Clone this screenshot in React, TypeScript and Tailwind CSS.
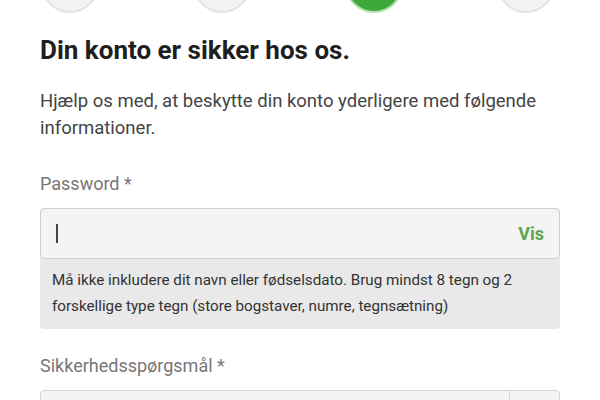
export default function App() {
  return (
    <div className="w-[600px] h-[400px] overflow-hidden bg-white font-['Roboto',sans-serif]">
      {/* Step indicators, cut off at the top */}
      <div className="flex gap-[94px] pl-[41px] -mt-[45px]">
        <div className="w-[58px] h-[58px] rounded-full bg-[#f3f3f3] border-2 border-[#e3e3e3]" />
        <div className="w-[58px] h-[58px] rounded-full bg-[#f3f3f3] border-2 border-[#e3e3e3]" />
        <div className="w-[58px] h-[58px] rounded-full bg-[#3fa83a] border-2 border-[#b5e0b0]" />
        <div className="w-[58px] h-[58px] rounded-full bg-[#f3f3f3] border-2 border-[#e3e3e3]" />
      </div>

      <div className="px-10">
        <h1 className="mt-[23px] text-[26px] leading-[28px] font-bold text-[#1e1e1e]">
          Din konto er sikker hos os.
        </h1>

        <p className="mt-[24px] text-[18.5px] leading-[27px] text-[#444]">
          Hjælp os med, at beskytte din konto yderligere med følgende informationer.
        </p>

        <label className="block mt-[30px] text-[18px] leading-[24px] text-[#777]">Password *</label>

        <div className="mt-[12px] rounded-[4px] bg-[#e9e9e9]">
          <div className="flex items-center justify-between h-[51px] px-[15px] rounded-[4px] border border-[#cfcfcf] bg-[#f4f4f4]">
            <span className="w-[2px] h-[19px] bg-[#444]" />
            <span className="text-[18px] font-bold text-[#5ea653]">Vis</span>
          </div>
          <p className="px-3 pt-[8px] pb-[10px] text-[15.2px] leading-[26px] text-[#333]">
            Må ikke inkludere dit navn eller fødselsdato. Brug mindst 8 tegn og 2 forskellige type tegn (store bogstaver, numre, tegnsætning)
          </p>
        </div>

        <label className="block mt-[25px] text-[18px] leading-[24px] text-[#777]">Sikkerhedsspørgsmål *</label>

        <div className="mt-[12px] flex h-[50px] rounded-[4px] border border-[#d6d6d6] bg-[#f4f4f4]">
          <div className="flex-1" />
          <div className="w-[50px] border-l border-[#d6d6d6]" />
        </div>
      </div>
    </div>
  );
}
